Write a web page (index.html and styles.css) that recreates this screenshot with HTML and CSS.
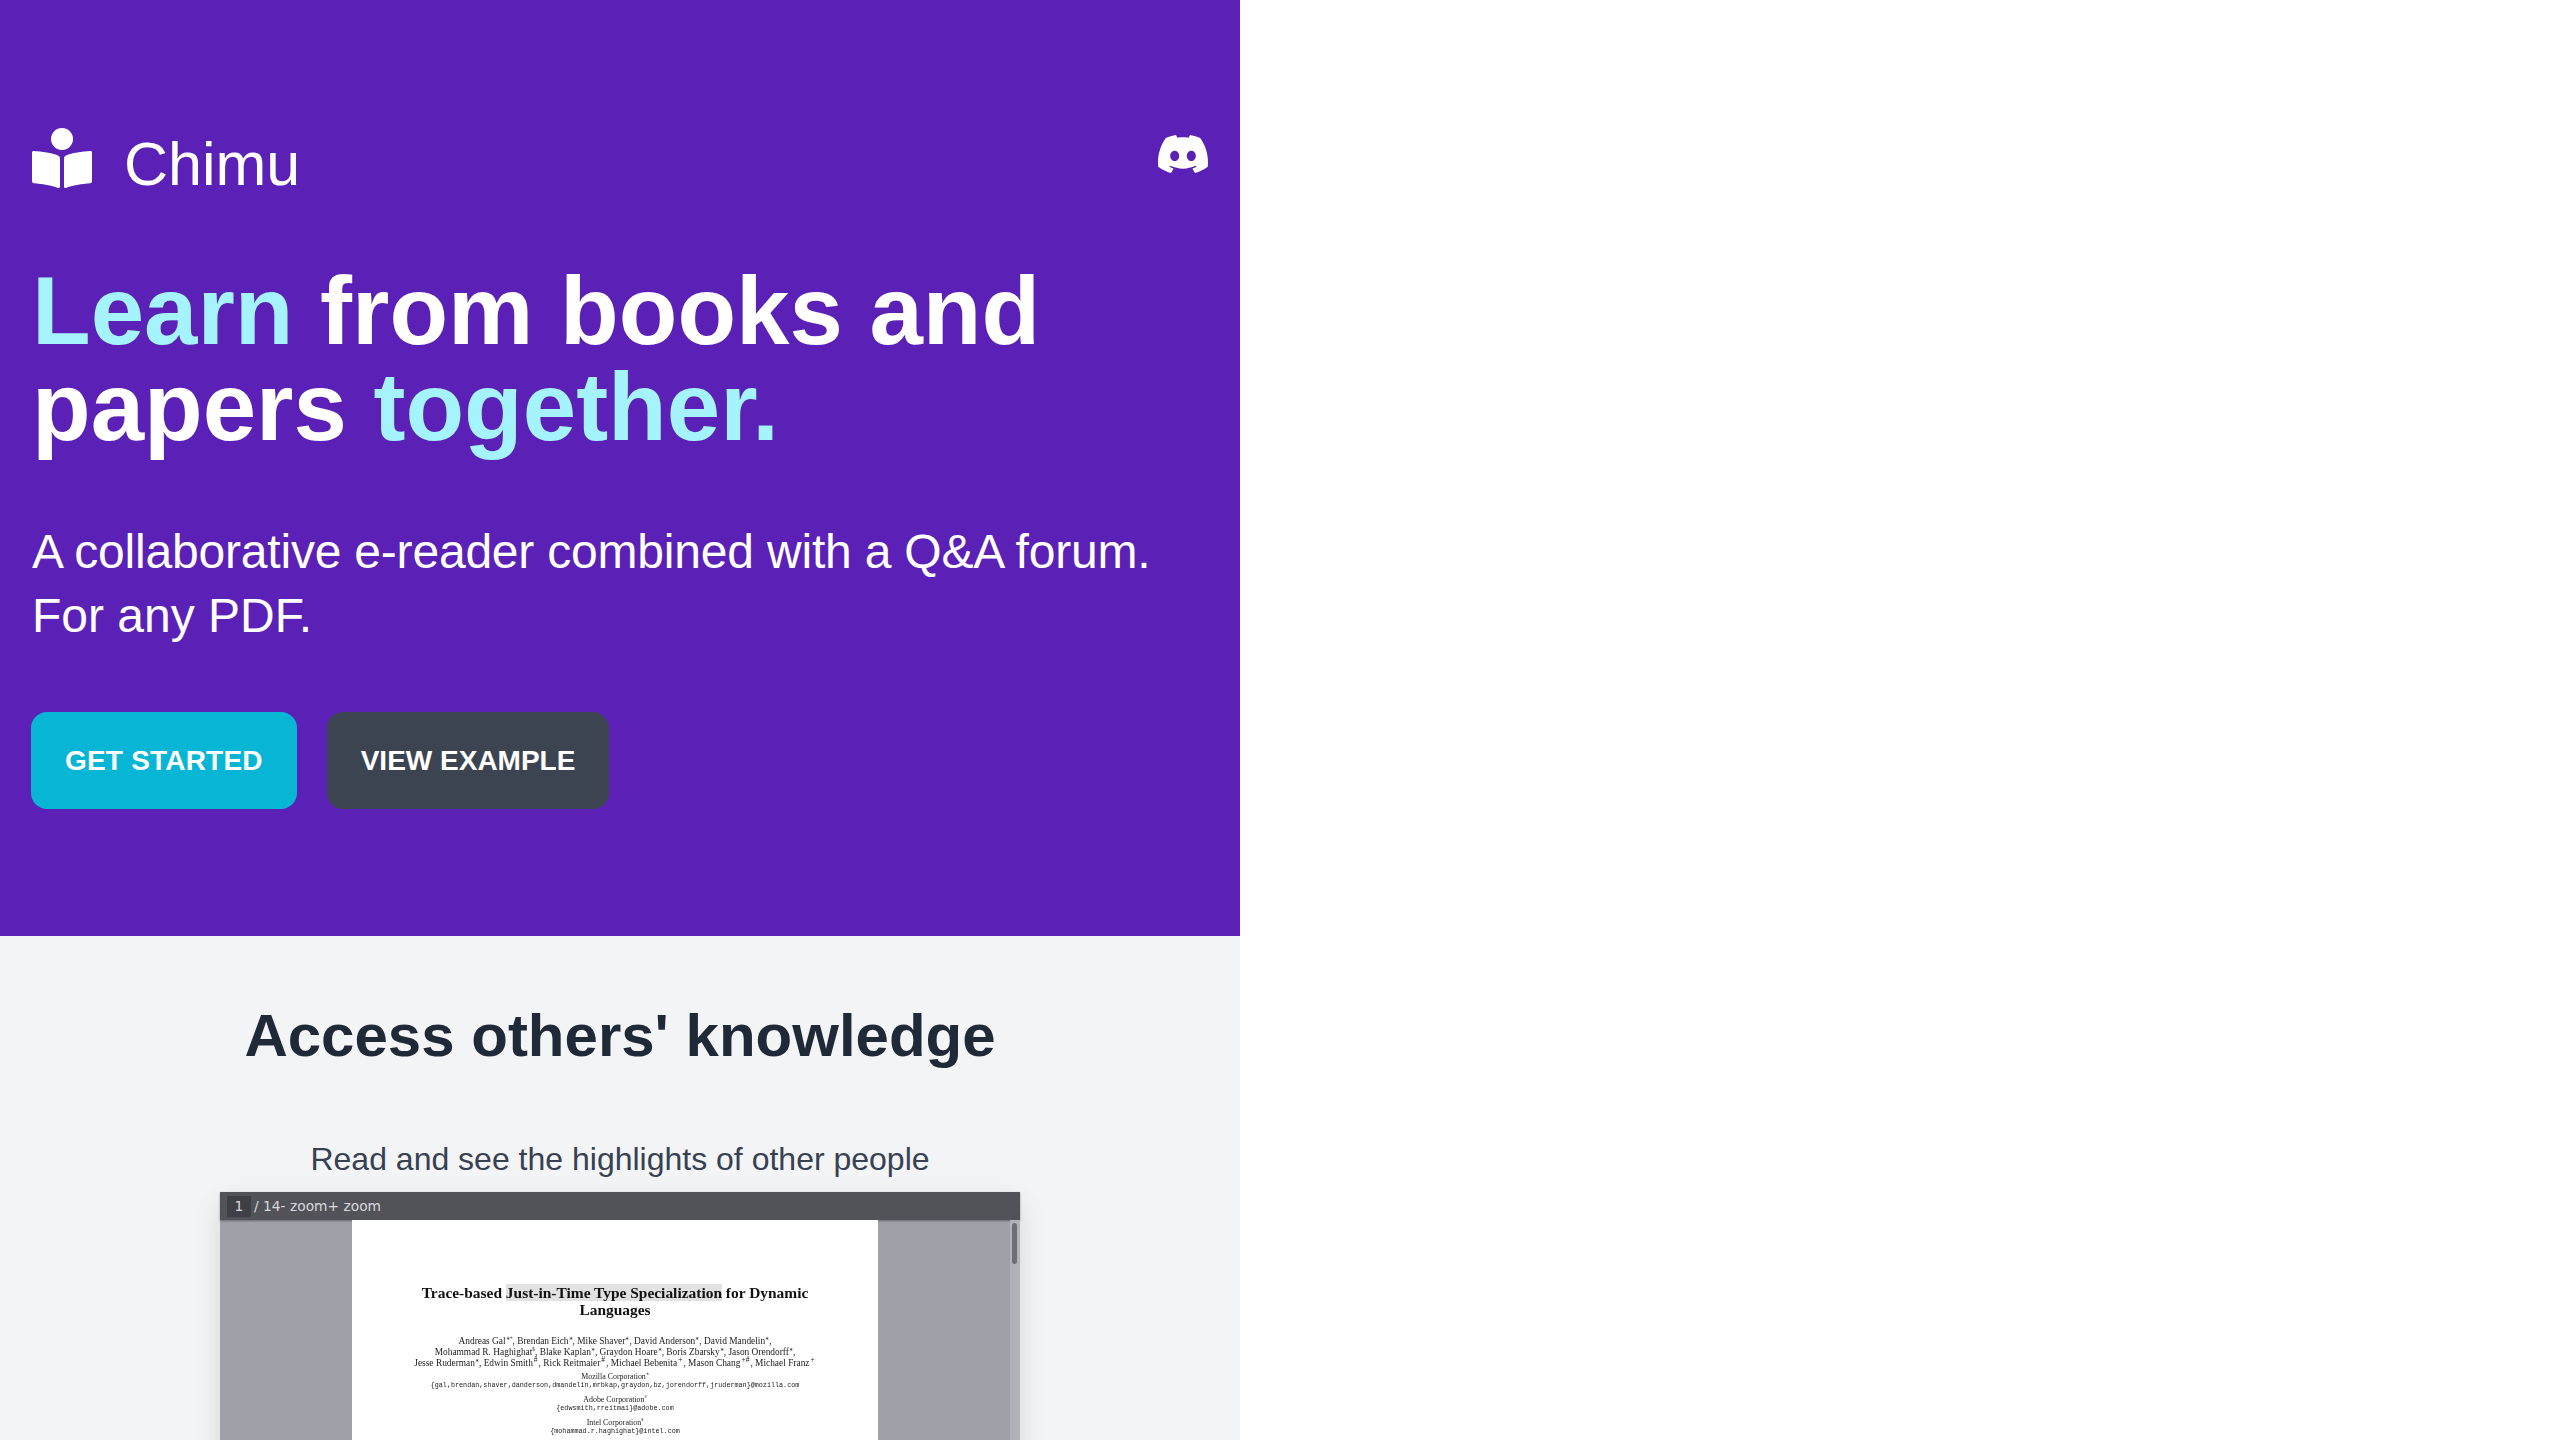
FILE: index.html
```html
<!DOCTYPE html>
<html lang="en">
<head>
    <meta charset="UTF-8">
    <meta name="viewport" content="width=device-width, initial-scale=1.0">
    <title>Chimu</title>
    <link rel="stylesheet" href="styles.css">
</head>
<body>
    <div class="column">
        <section class="hero">
            <div class="nav">
                <div class="brand">
                    <svg class="brand-icon" viewBox="0 0 60 60" aria-hidden="true">
                        <circle cx="30" cy="11" r="11"/>
                        <path d="M1.5 23C10 23.500 20 25 26 27.500C27.200 28 28 29 28 30.500V58.500C28 59.700 27 60.300 26 59.900C20 57.500 10 55.800 1.800 55.200C.7 55.100 0 54.300 0 53.200V24.500C0 23.600.6 23 1.500 23Z"/>
                        <path d="M58.500 23C50 23.500 40 25 34 27.500C32.800 28 32 29 32 30.500V58.500C32 59.700 33 60.300 34 59.900C40 57.500 50 55.800 58.200 55.200C59.300 55.100 60 54.300 60 53.200V24.500C60 23.600 59.400 23 58.500 23Z"/>
                    </svg>
                    <span class="brand-name">Chimu</span>
                </div>
                <svg class="discord" viewBox="0 0 24 24" aria-hidden="true">
                    <path d="M20.317 4.3698a19.7913 19.7913 0 00-4.8851-1.5152.0741.0741 0 00-.0785.0371c-.211.3753-.4447.8648-.6083 1.2495-1.8447-.2762-3.68-.2762-5.4868 0-.1636-.3933-.4058-.8742-.6177-1.2495a.077.077 0 00-.0785-.037 19.7363 19.7363 0 00-4.8852 1.515.0699.0699 0 00-.0321.0277C.5334 9.0458-.319 13.5799.0992 18.0578a.0824.0824 0 00.0312.0561c2.0528 1.5076 4.0413 2.4228 5.9929 3.0294a.0777.0777 0 00.0842-.0276c.4616-.6304.8731-1.2952 1.226-1.9942a.076.076 0 00-.0416-.1057c-.6528-.2476-1.2743-.5495-1.8722-.8923a.077.077 0 01-.0076-.1277c.1258-.0943.2517-.1923.3718-.2914a.0743.0743 0 01.0776-.0105c3.9278 1.7933 8.18 1.7933 12.0614 0a.0739.0739 0 01.0785.0095c.1202.099.246.1981.3728.2924a.077.077 0 01-.0066.1276 12.2986 12.2986 0 01-1.873.8914.0766.0766 0 00-.0407.1067c.3604.698.7719 1.3628 1.225 1.9932a.076.076 0 00.0842.0286c1.961-.6067 3.9495-1.5219 6.0023-3.0294a.077.077 0 00.0313-.0552c.5004-5.177-.8382-9.6739-3.5485-13.6604a.061.061 0 00-.0312-.0286zM8.02 15.3312c-1.1825 0-2.1569-1.0857-2.1569-2.419 0-1.3332.9555-2.4189 2.157-2.4189 1.2108 0 2.1757 1.0952 2.1568 2.419 0 1.3332-.9555 2.4189-2.1569 2.4189zm7.9748 0c-1.1825 0-2.1569-1.0857-2.1569-2.419 0-1.3332.9554-2.4189 2.1569-2.4189 1.2108 0 2.1757 1.0952 2.1568 2.419 0 1.3332-.946 2.4189-2.1568 2.4189Z"/>
                </svg>
            </div>
            <h1 class="headline"><span class="accent">Learn</span> from books and papers <span class="accent">together.</span></h1>
            <p class="lead">A collaborative e-reader combined with a Q&amp;A forum.<br>For any PDF.</p>
            <div class="actions">
                <a class="btn btn-primary">GET STARTED</a>
                <a class="btn btn-dark">VIEW EXAMPLE</a>
            </div>
        </section>

        <section class="features">
            <h2 class="features-title">Access others' knowledge</h2>
            <p class="features-text">Read and see the highlights of other people</p>
            <div class="viewer">
                <div class="toolbar">
                    <span class="page-input">1</span>
                    <span class="toolbar-text">/ 14- zoom+ zoom</span>
                </div>
                <div class="viewer-body">
                    <div class="paper">
                        <h3 class="paper-title">Trace-based <mark>Just-in-Time Type Specialization</mark> for Dynamic Languages</h3>
                        <p class="authors">Andreas Gal<sup>∗+</sup>, Brendan Eich<sup>∗</sup>, Mike Shaver<sup>∗</sup>, David Anderson<sup>∗</sup>, David Mandelin<sup>∗</sup>,<br>Mohammad R. Haghighat<sup>$</sup>, Blake Kaplan<sup>∗</sup>, Graydon Hoare<sup>∗</sup>, Boris Zbarsky<sup>∗</sup>, Jason Orendorff<sup>∗</sup>,<br>Jesse Ruderman<sup>∗</sup>, Edwin Smith<sup class="wide">#</sup>, Rick Reitmaier<sup class="wide">#</sup>, Michael Bebenita<sup class="wide">+</sup>, Mason Chang<sup class="wide">+#</sup>, Michael Franz<sup class="wide">+</sup></p>
                        <p class="org">Mozilla Corporation<sup>∗</sup></p>
                        <p class="mail">{gal,brendan,shaver,danderson,dmandelin,mrbkap,graydon,bz,jorendorff,jruderman}@mozilla.com</p>
                        <p class="org org-gap">Adobe Corporation<sup>#</sup></p>
                        <p class="mail">{edwsmith,rreitmai}@adobe.com</p>
                        <p class="org org-gap">Intel Corporation<sup>$</sup></p>
                        <p class="mail">{mohammad.r.haghighat}@intel.com</p>
                    </div>
                    <div class="scrollbar"><div class="scroll-thumb"></div></div>
                </div>
            </div>
        </section>
    </div>
</body>
</html>
```

FILE: styles.css
```css
html, body {
    margin: 0;
    padding: 0;
    background: #fff;
}
body {
    font-family: "Liberation Sans", Arial, sans-serif;
    height: 1440px;
    overflow: hidden;
}
.column {
    width: 1240px;
}
.hero {
    box-sizing: border-box;
    height: 936px;
    padding: 120px 32px 0;
    background: #5b21b6;
    color: #fff;
}
.nav {
    display: flex;
    justify-content: space-between;
    align-items: flex-start;
    height: 76px;
}
.brand {
    display: flex;
    align-items: center;
    gap: 32px;
    height: 76px;
}
.brand-icon {
    width: 60px;
    height: 60px;
    fill: #fff;
}
.brand-name {
    font-size: 61px;
    line-height: 76px;
    margin-top: 11px;
}
.discord {
    width: 50px;
    height: 50px;
    margin-top: 9px;
    fill: #fff;
}
.headline {
    margin: 67px 0 0;
    font-size: 96px;
    line-height: 96px;
    font-weight: 700;
}
.accent {
    color: #a5f3fc;
}
.lead {
    margin: 65px 0 0;
    font-size: 48px;
    line-height: 64px;
}
.lead::first-line {
    letter-spacing: -0.2px;
}
.actions {
    display: flex;
    gap: 30px;
    margin: 64px 0 0 -1px;
}
.btn {
    display: flex;
    align-items: center;
    padding: 0 34px;
    height: 97px;
    border-radius: 16px;
    font-size: 28px;
    font-weight: 700;
}
.btn-primary {
    background: #06b6d4;
    letter-spacing: 0.2px;
}
.btn-dark {
    background: #3d4451;
}
.features {
    height: 504px;
    background: #f3f4f6;
    text-align: center;
    padding-top: 62px;
    box-sizing: border-box;
}
.features-title {
    margin: 0;
    font-size: 60px;
    line-height: 76px;
    color: #1f2937;
}
.features-text {
    margin: 65px 0 0;
    font-size: 32px;
    line-height: 40px;
    color: #374151;
}
.viewer {
    width: 800px;
    height: 600px;
    margin: 13px auto 0;
    box-shadow: 0 10px 25px rgba(0, 0, 0, 0.12);
}
.toolbar {
    display: flex;
    align-items: center;
    height: 28px;
    background: #525259;
    padding-left: 7px;
    font-family: "DejaVu Sans", sans-serif;
    font-size: 13.8px;
    color: #d8d8dc;
    box-shadow: 0 1px 2px rgba(0, 0, 0, 0.35);
    position: relative;
    text-align: left;
}
.page-input {
    width: 24px;
    height: 21px;
    line-height: 21px;
    background: #3f4045;
    text-align: center;
    margin-right: 3px;
}
.viewer-body {
    display: flex;
    justify-content: flex-start;
    height: 572px;
    padding-left: 132px;
    background: #a0a0a9;
}
.paper {
    box-sizing: border-box;
    width: 526px;
    height: 572px;
    background: #fff;
    padding-top: 64px;
    font-family: "Liberation Serif", "Times New Roman", serif;
    color: #222;
    filter: blur(0.35px);
}
.scrollbar {
    width: 10px;
    margin-left: auto;
    background: #b1b1b7;
    position: relative;
}
.scroll-thumb {
    position: absolute;
    top: 3px;
    left: 2px;
    width: 5px;
    height: 41px;
    border-radius: 3px;
    background: #6f6f73;
}
.paper-title {
    margin: 0 auto;
    width: 400px;
    font-size: 15.45px;
    line-height: 17px;
    font-weight: 700;
    color: #111;
}
.paper-title mark {
    background: #e2e2e2;
    color: inherit;
}
.authors {
    margin: 18px 0 0;
    font-size: 9.4px;
    line-height: 11px;
}
.org {
    margin: 3px 0 0;
    font-size: 7.9px;
    line-height: 9px;
}
.org-gap {
    margin-top: 5px;
}
.mail {
    margin: 0;
    font-family: "Liberation Mono", monospace;
    font-size: 6.75px;
    line-height: 9px;
}
sup {
    font-size: 55%;
    line-height: 0;
}
sup.wide {
    font-size: 80%;
    padding: 0 1px;
}
```
